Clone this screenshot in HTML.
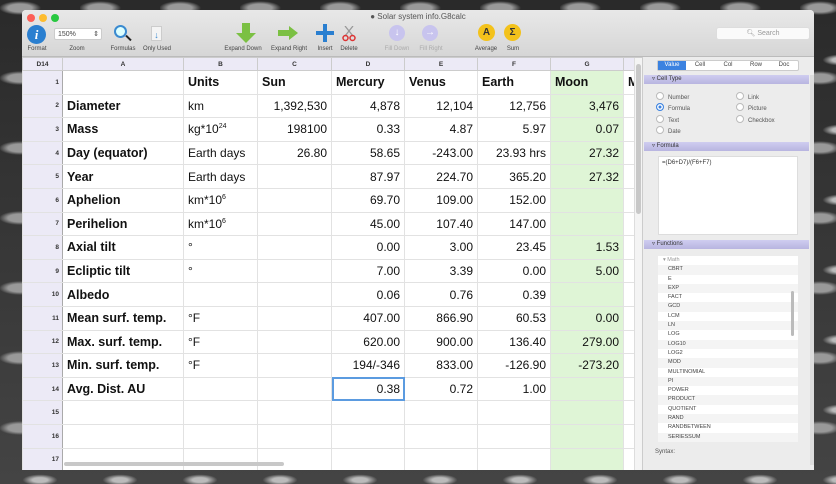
<!DOCTYPE html>
<html><head><meta charset="utf-8"><style>
*{margin:0;padding:0;box-sizing:border-box}
body{width:836px;height:484px;overflow:hidden;position:relative;font-family:"Liberation Sans",sans-serif;
background:#3a3a3a;
background-image:radial-gradient(ellipse 30px 10px at 20px 8px,#999 40%,transparent 70%),radial-gradient(ellipse 20px 14px at 60px 30px,#666 40%,transparent 70%),radial-gradient(ellipse 25px 8px at 40px 60px,#bbb 30%,transparent 70%),linear-gradient(#2a2a2a,#444);
background-size:80px 70px,80px 70px,80px 70px,100% 100%}
.win{position:absolute;left:22px;top:10px;width:792px;height:460px;background:#fff;overflow:hidden;border-radius:4px 4px 0 0}
.tb{position:absolute;left:0;top:0;width:792px;height:47px;background:linear-gradient(#e8e8e8,#d6d6d6);border-bottom:1px solid #bbb}
.dot{position:absolute;top:4px;width:8px;height:8px;border-radius:50%}
.title{position:absolute;left:0;width:792px;top:2px;text-align:center;font-size:8px;color:#555}
.lbl{position:absolute;top:36px;font-size:6px;color:#444;text-align:center}
.ic{position:absolute}
.grid{position:absolute;left:0;top:47px}
table{border-collapse:collapse;table-layout:fixed;font-family:"Liberation Sans",sans-serif}
td{border:1px solid #e2e2e2;height:23.6px;font-size:12px;color:#111;padding:0 4px;white-space:nowrap;overflow:hidden}
tr.h td{height:13px;background:#eceaf6;font-size:6.5px;text-align:center;font-weight:bold;color:#333;border-color:#ccc}
td.rn{background:#eceaf6;font-size:6.5px;text-align:right;font-weight:bold;color:#333;padding-right:3px;border-right:1px solid #aaa}
td.a{font-weight:bold;font-size:12.5px}
td.n{text-align:right}
td.g{background:#dff5d6}
.panel{position:absolute;left:620px;top:47px;width:172px;height:413px;background:#ececec;border-left:1px solid #ccc}
.hd{position:absolute;left:1px;width:165px;height:9px;background:linear-gradient(#cfcdf0,#b8b5e0);font-size:6px;color:#333;padding-left:8px;line-height:9px}
.tabs{position:absolute;left:14px;top:3px;width:142px;height:11px;background:#fff;border:1px solid #ccc;border-radius:2px;font-size:6px;display:flex}
.tabs div{flex:1;text-align:center;line-height:9px;color:#444}
.r{position:absolute;font-size:6px;color:#555}
.r:before{content:"";display:inline-block;width:6px;height:6px;border-radius:50%;border:1px solid #bbb;background:#fff;margin-right:4px;vertical-align:-1px}
.r.on:before{background:#3b82e0;border-color:#3b82e0;box-shadow:inset 0 0 0 1.5px #fff}
.list{position:absolute;left:15px;top:199px;width:140px;height:186px;background:#fff;font-size:5.5px;color:#444}
.list div{height:9.3px;line-height:9.3px;padding-left:10px}
.list div:nth-child(even){background:#f4f4f4}
</style></head><body>
<div class="win">
<div class="tb">
<div class="dot" style="left:5px;background:#fc5f57"></div>
<div class="dot" style="left:17px;background:#fdbc2e"></div>
<div class="dot" style="left:29px;background:#28c840"></div>
<div class="title">● Solar system info.G8calc</div>
<div class="ic" style="left:5px;top:15px;width:19px;height:19px;border-radius:50%;background:#2a7fd0;color:#fff;font:italic bold 13px 'Liberation Serif',serif;text-align:center;line-height:19px">i</div>
<div class="lbl" style="left:0;width:30px">Format</div>
<div class="ic" style="left:32px;top:18px;width:48px;height:12px;background:#fff;border:1px solid #ccc;border-radius:2px;font-size:7px;padding-left:3px;line-height:11px;color:#444">150% <span style="float:right;padding-right:2px">⇕</span></div>
<div class="lbl" style="left:38px;width:34px">Zoom</div>
<div class="ic" style="left:92px;top:15px;width:13px;height:13px;border-radius:50%;border:2px solid #3a8ad0;background:#dff"></div>
<div class="ic" style="left:103px;top:27px;width:7px;height:2px;background:#222;transform:rotate(45deg)"></div>
<div class="lbl" style="left:84px;width:34px">Formulas</div>
<div class="ic" style="left:129px;top:16px;width:11px;height:15px;background:#f4f4f4;border:1px solid #ccc;color:#3a8ad0;font-size:9px;text-align:center;line-height:16px">↓</div>
<div class="lbl" style="left:118px;width:34px">Only Used</div>
<div class="ic" style="left:214px;top:13px"><svg width="20" height="20"><path d="M6 0h8v10h6L10 20 0 10h6z" fill="#7bc043"/></svg></div>
<div class="lbl" style="left:198px;width:46px">Expand Down</div>
<div class="ic" style="left:256px;top:16px;width:20px;height:14px"><svg width="20" height="14"><path d="M0 4h11V0l9 7-9 7v-4H0z" fill="#7bc043"/></svg></div>
<div class="lbl" style="left:245px;width:44px">Expand Right</div>
<div class="ic" style="left:294px;top:14px"><svg width="18" height="18"><path d="M7 0h4v7h7v4h-7v7H7v-7H0V7h7z" fill="#2a7fd0"/></svg></div>
<div class="lbl" style="left:290px;width:26px">Insert</div>
<div class="ic" style="left:320px;top:16px"><svg width="14" height="16"><path d="M3 0l8 10M11 0L3 10" stroke="#999" stroke-width="1.3"/><circle cx="3.5" cy="12" r="2.5" fill="none" stroke="#d33" stroke-width="1.5"/><circle cx="10.5" cy="12" r="2.5" fill="none" stroke="#d33" stroke-width="1.5"/></svg></div>
<div class="lbl" style="left:314px;width:26px">Delete</div>
<div class="ic" style="left:367px;top:15px;width:16px;height:16px;border-radius:50%;background:#c8c4ee;color:#fff;font-size:10px;text-align:center;line-height:16px">↓</div>
<div class="lbl" style="left:360px;width:30px;color:#aaa">Fill Down</div>
<div class="ic" style="left:400px;top:15px;width:16px;height:16px;border-radius:50%;background:#c8c4ee;color:#fff;font-size:10px;text-align:center;line-height:16px">→</div>
<div class="lbl" style="left:394px;width:30px;color:#aaa">Fill Right</div>
<div class="ic" style="left:456px;top:14px;width:17px;height:17px;border-radius:50%;background:#f3c21b;font:bold 10px sans-serif;text-align:center;line-height:17px;color:#333">A</div>
<div class="lbl" style="left:448px;width:32px">Average</div>
<div class="ic" style="left:482px;top:14px;width:17px;height:17px;border-radius:50%;background:#f3c21b;font:bold 10px sans-serif;text-align:center;line-height:17px;color:#333">Σ</div>
<div class="lbl" style="left:480px;width:22px">Sum</div>
<div class="ic" style="left:694px;top:17px;width:94px;height:13px;background:#fafafa;border:1px solid #ddd;border-radius:3px;font-size:7px;color:#999;text-align:center;line-height:12px">🔍︎ Search</div>
</div>
<div class="grid"><table>
<colgroup><col style="width:40px"><col style="width:121px"><col style="width:74px"><col style="width:74px"><col style="width:73px"><col style="width:73px"><col style="width:73px"><col style="width:73px"><col style="width:11px"></colgroup>
<tr class="h"><td>D14</td><td>A</td><td>B</td><td>C</td><td>D</td><td>E</td><td>F</td><td>G</td><td></td></tr>
<tr><td class="rn">1</td><td></td><td class="a">Units</td><td class="a">Sun</td><td class="a">Mercury</td><td class="a">Venus</td><td class="a">Earth</td><td class="a g">Moon</td><td class="a">M</td></tr>
<tr><td class="rn">2</td><td class="a">Diameter</td><td>km</td><td class="n">1,392,530</td><td class="n">4,878</td><td class="n">12,104</td><td class="n">12,756</td><td class="n g">3,476</td><td></td></tr>
<tr><td class="rn">3</td><td class="a">Mass</td><td>kg*10<sup style="font-size:7px">24</sup></td><td class="n">198100</td><td class="n">0.33</td><td class="n">4.87</td><td class="n">5.97</td><td class="n g">0.07</td><td></td></tr>
<tr><td class="rn">4</td><td class="a">Day (equator)</td><td>Earth days</td><td class="n">26.80</td><td class="n">58.65</td><td class="n">-243.00</td><td class="n">23.93 hrs</td><td class="n g">27.32</td><td></td></tr>
<tr><td class="rn">5</td><td class="a">Year</td><td>Earth days</td><td></td><td class="n">87.97</td><td class="n">224.70</td><td class="n">365.20</td><td class="n g">27.32</td><td></td></tr>
<tr><td class="rn">6</td><td class="a">Aphelion</td><td>km*10<sup style="font-size:7px">6</sup></td><td></td><td class="n">69.70</td><td class="n">109.00</td><td class="n">152.00</td><td class="g"></td><td></td></tr>
<tr><td class="rn">7</td><td class="a">Perihelion</td><td>km*10<sup style="font-size:7px">6</sup></td><td></td><td class="n">45.00</td><td class="n">107.40</td><td class="n">147.00</td><td class="g"></td><td></td></tr>
<tr><td class="rn">8</td><td class="a">Axial tilt</td><td>°</td><td></td><td class="n">0.00</td><td class="n">3.00</td><td class="n">23.45</td><td class="n g">1.53</td><td></td></tr>
<tr><td class="rn">9</td><td class="a">Ecliptic tilt</td><td>°</td><td></td><td class="n">7.00</td><td class="n">3.39</td><td class="n">0.00</td><td class="n g">5.00</td><td></td></tr>
<tr><td class="rn">10</td><td class="a">Albedo</td><td></td><td></td><td class="n">0.06</td><td class="n">0.76</td><td class="n">0.39</td><td class="g"></td><td></td></tr>
<tr><td class="rn">11</td><td class="a">Mean surf. temp.</td><td>°F</td><td></td><td class="n">407.00</td><td class="n">866.90</td><td class="n">60.53</td><td class="n g">0.00</td><td></td></tr>
<tr><td class="rn">12</td><td class="a">Max. surf. temp.</td><td>°F</td><td></td><td class="n">620.00</td><td class="n">900.00</td><td class="n">136.40</td><td class="n g">279.00</td><td></td></tr>
<tr><td class="rn">13</td><td class="a">Min. surf. temp.</td><td>°F</td><td></td><td class="n">194/-346</td><td class="n">833.00</td><td class="n">-126.90</td><td class="n g">-273.20</td><td></td></tr>
<tr><td class="rn">14</td><td class="a">Avg. Dist. AU</td><td></td><td></td><td class="n" style="outline:2px solid #5b9be0;outline-offset:-2px">0.38</td><td class="n">0.72</td><td class="n">1.00</td><td class="g"></td><td></td></tr>
<tr><td class="rn">15</td><td></td><td></td><td></td><td></td><td></td><td></td><td class="g"></td><td></td></tr>
<tr><td class="rn">16</td><td></td><td></td><td></td><td></td><td></td><td></td><td class="g"></td><td></td></tr>
<tr><td class="rn">17</td><td></td><td></td><td></td><td></td><td></td><td></td><td class="g"></td><td></td></tr>
</table></div>
<div style="position:absolute;left:612px;top:48px;width:8px;height:412px;background:#f4f4f4;border-left:1px solid #ddd"><div style="margin:6px 1px;width:5px;height:150px;background:#c8c8c8;border-radius:3px"></div></div>
<div style="position:absolute;left:42px;top:452px;width:220px;height:4px;background:#c8c8c8;border-radius:2px"></div>
<div class="panel">
<div class="tabs"><div style="background:#3b82e0;color:#fff">Value</div><div>Cell</div><div>Col</div><div>Row</div><div>Doc</div></div>
<div class="hd" style="top:18px">▿ Cell Type</div>
<div class="r" style="left:13px;top:35px">Number</div><div class="r" style="left:93px;top:35px">Link</div>
<div class="r on" style="left:13px;top:46px">Formula</div><div class="r" style="left:93px;top:46px">Picture</div>
<div class="r" style="left:13px;top:58px">Text</div><div class="r" style="left:93px;top:58px">Checkbox</div>
<div class="r" style="left:13px;top:69px">Date</div>
<div class="hd" style="top:85px">▿ Formula</div>
<div style="position:absolute;left:15px;top:99px;width:140px;height:79px;background:#fff;border:1px solid #ddd;font-size:6px;color:#333;padding:3px 3px">=(D6+D7)/(F6+F7)</div>
<div class="hd" style="top:183px">▿ Functions</div>
<div class="list"><div style="padding-left:5px;color:#999">▾ Math</div><div>CBRT</div><div>E</div><div>EXP</div><div>FACT</div><div>GCD</div><div>LCM</div><div>LN</div><div>LOG</div><div>LOG10</div><div>LOG2</div><div>MOD</div><div>MULTINOMIAL</div><div>PI</div><div>POWER</div><div>PRODUCT</div><div>QUOTIENT</div><div>RAND</div><div>RANDBETWEEN</div><div>SERIESSUM</div>
<span style="position:absolute;right:4px;top:35px;width:3px;height:45px;background:#bbb;border-radius:2px"></span></div>
<div style="position:absolute;left:12px;top:392px;font-size:6px;color:#555">Syntax:</div>
<div style="position:absolute;left:167px;top:18px;width:4px;height:390px;background:#ddd"></div>
</div>
</div>
</body></html>
